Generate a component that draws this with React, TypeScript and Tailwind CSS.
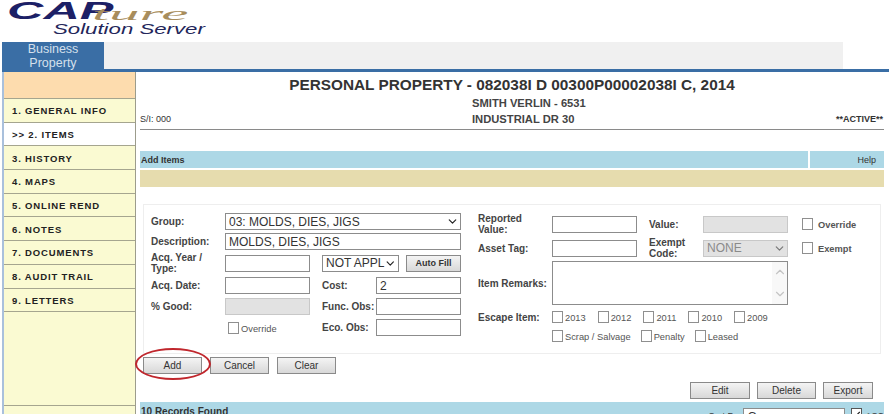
import { ChevronDown, ChevronUp, Check } from "lucide-react";

const navItems = [
  "1. GENERAL INFO",
  ">> 2. ITEMS",
  "3. HISTORY",
  "4. MAPS",
  "5. ONLINE REND",
  "6. NOTES",
  "7. DOCUMENTS",
  "8. AUDIT TRAIL",
  "9. LETTERS",
];

function Logo() {
  return (
    <div className="relative h-[42px] w-[210px] overflow-hidden">
      <span className="absolute left-[7px] top-[-3px] origin-left scale-x-[2.1] text-[24px] font-bold italic leading-[28px] text-[#1c2066]">
        CAP
      </span>
      <span className="absolute left-[92px] top-[4px] origin-left scale-x-[3.4] text-[18px] italic leading-[20px] text-[#a88d5c] [font-family:'Liberation_Serif',serif]">
        ture
      </span>
      <span className="absolute left-[53px] top-[20px] origin-left scale-x-[1.48] text-[15px] italic leading-[17px] text-[#23265a]">
        Solution Server
      </span>
    </div>
  );
}

function Field({ className = "", value = "", disabled = false }: { className?: string; value?: string; disabled?: boolean }) {
  return (
    <input
      readOnly
      defaultValue={value}
      className={`h-[17px] border border-[#8c8c8c] px-[3px] text-[12px] text-[#333] outline-none ${disabled ? "bg-[#e2e2e2] border-[#c8c8c8]" : "bg-white"} ${className}`}
    />
  );
}

function Select({ value, className = "", disabled = false }: { value: string; className?: string; disabled?: boolean }) {
  return (
    <div className={`flex h-[17px] items-center justify-between border border-[#8c8c8c] pl-[3px] pr-[1px] text-[12px] ${disabled ? "bg-[#e2e2e2] border-[#c8c8c8] text-[#8a8a8a]" : "bg-white text-[#333]"} ${className}`}>
      <span className="whitespace-nowrap">{value}</span>
      <ChevronDown size={13} strokeWidth={2.2} className={disabled ? "text-[#777]" : "text-[#222]"} />
    </div>
  );
}

function Label({ children, className = "" }: { children: React.ReactNode; className?: string }) {
  return <div className={`text-[10px] font-bold leading-[11px] text-[#444] ${className}`}>{children}</div>;
}

function Box({ label, bold = false, className = "" }: { label: string; bold?: boolean; className?: string }) {
  return (
    <label className={`flex items-end gap-[2px] ${className}`}>
      <span className="h-[12px] w-[11px] shrink-0 border border-[#8f8f8f] bg-white" />
      <span className={`translate-y-[1px] text-[9.3px] leading-[11px] text-[#555] ${bold ? "font-bold" : ""}`}>{label}</span>
    </label>
  );
}

function Btn({ children, className = "" }: { children: React.ReactNode; className?: string }) {
  return (
    <button className={`h-[17px] w-[59px] border border-[#8a8a8a] bg-gradient-to-b from-[#f4f4f4] to-[#d8d8d8] text-[10px] leading-none text-[#333] ${className}`}>
      {children}
    </button>
  );
}

export default function App() {
  return (
    <div className="h-[414px] w-[889px] overflow-hidden bg-white [font-family:'Liberation_Sans',Arial,sans-serif]">
      <Logo />

      <div className="flex h-[27px] pl-[2px] pr-[46px]">
        <div className="flex w-[102px] items-center justify-center bg-[#3a6ea5] text-center text-[12.5px] leading-[14px] text-[#d5e0ec]">
          Business
          <br />
          Property
        </div>
        <div className="flex-1 bg-[#f0f0f0]" />
      </div>
      <div className="ml-[2px] h-[3px] bg-[#3a6ea5]" />

      <div className="relative ml-[2px] flex h-[342px]">
        <aside className="flex w-[134px] shrink-0 flex-col border-l-2 border-r border-l-[#a9c0dc] border-r-[#9c9c8c] bg-[#fafad2]">
          <div className="h-[27px] border-b border-[#a5a58f] bg-[#fddcae]" />
          {navItems.map((item) => (
            <div
              key={item}
              className={`flex h-[23.7px] shrink-0 items-center border-b border-[#a5a58f] pl-[8px] pt-[2px] text-[9.5px] font-bold tracking-[0.85px] text-[#222] ${item.startsWith(">>") ? "bg-white" : ""}`}
            >
              {item}
            </div>
          ))}
          <div className="flex-1" />
          <div className="h-[9px] border-t border-[#a5a58f] pl-[8px] pt-[6px] text-[9.5px] font-bold leading-[11px] tracking-[0.85px] text-[#222]">
            CLOSE
          </div>
        </aside>

        <main className="min-w-0 flex-1 pl-[4px] pr-[5px]">
          <div className="relative h-[58px] border-b border-[#8a8a8a]">
            <h1 className="pt-[3px] text-center text-[15.35px] font-bold leading-[19px] text-[#333]">
              PERSONAL PROPERTY - 082038I D 00300P00002038I C, 2014
            </h1>
            <p className="pl-[332px] pt-[2px] text-[11.2px] font-bold leading-[14px] text-[#444]">SMITH VERLIN - 6531</p>
            <div className="flex items-center pr-[1px] pt-[2px] leading-[14px] text-[#333]">
              <span className="w-[332px] text-[9px]">S/I: 000</span>
              <span className="text-[11.2px] font-bold text-[#444]">INDUSTRIAL DR 30</span>
              <span className="ml-auto text-[9px] font-bold">**ACTIVE**</span>
            </div>
          </div>

          <div className="mt-[21px] flex h-[17px] gap-[2px] text-[9px] font-bold leading-[18px] text-[#333]">
            <div className="flex-1 bg-[#add8e6] pl-[1px]">Add Items</div>
            <div className="w-[74px] bg-[#add8e6] pr-[8px] text-right text-[9px] font-normal">Help</div>
          </div>
          <div className="mt-[2px] h-[17px] bg-[#e6dcae]" />

          <section className="ml-[3px] mt-[17px] flex h-[150px] w-[738px] border border-[#eeeeee] pl-[7px] pt-[8px]">
            <div className="flex w-[311px] flex-col">
              <div className="flex items-center">
                <Label className="w-[74px]">Group:</Label>
                <Select value="03: MOLDS, DIES, JIGS" className="w-[236px]" />
              </div>
              <div className="mt-[3px] flex items-center">
                <Label className="w-[74px]">Description:</Label>
                <Field className="w-[236px]" value="MOLDS, DIES, JIGS" />
              </div>
              <div className="mt-[2px] flex items-center">
                <Label className="w-[74px] text-[9.5px]">
                  Acq. Year /<br />
                  Type:
                </Label>
                <Field className="w-[85px]" />
                <Select value="NOT APPL" className="ml-[12px] w-[77px]" />
                <Btn className="ml-[7px] !h-[17px] !w-[55px] !text-[9px] font-bold">Auto Fill</Btn>
              </div>
              <div className="mt-[3px] flex items-center">
                <Label className="w-[74px]">Acq. Date:</Label>
                <Field className="w-[85px]" />
                <Label className="ml-[12px] w-[54px]">Cost:</Label>
                <Field className="w-[85px]" value="2" />
              </div>
              <div className="mt-[4px] flex items-center">
                <Label className="w-[74px]">% Good:</Label>
                <Field className="w-[85px]" disabled />
                <Label className="ml-[12px] w-[54px]">Func. Obs:</Label>
                <Field className="w-[85px]" />
              </div>
              <div className="mt-[4px] flex items-center">
                <div className="w-[77px]" />
                <Box label="Override" className="w-[82px]" />
                <Label className="ml-[12px] w-[54px]">Eco. Obs:</Label>
                <Field className="w-[85px]" />
              </div>
            </div>

            <div className="ml-[16px] flex flex-col">
              <div className="flex items-center">
                <Label className="w-[74px] text-[9.3px]">
                  Reported
                  <br />
                  Value:
                </Label>
                <Field className="w-[85px]" />
                <Label className="ml-[12px] w-[54px] text-[9.3px]">Value:</Label>
                <Field className="w-[85px]" disabled />
                <Box label="Override" bold className="ml-[14px] gap-[5px]" />
              </div>
              <div className="mt-[2px] flex items-center">
                <Label className="w-[74px] text-[9.3px]">Asset Tag:</Label>
                <Field className="w-[85px]" />
                <Label className="ml-[12px] w-[54px] text-[9.3px]">
                  Exempt
                  <br />
                  Code:
                </Label>
                <Select value="NONE" disabled className="w-[85px]" />
                <Box label="Exempt" bold className="ml-[14px] gap-[5px]" />
              </div>
              <div className="mt-[2px] flex items-center">
                <Label className="w-[74px]">Item Remarks:</Label>
                <div className="flex h-[44px] w-[236px] justify-end border border-[#8c8c8c] bg-white">
                  <div className="flex w-[15px] flex-col items-center justify-between bg-[#f8f8f8] py-[3px] text-[#c4c4c4]">
                    <ChevronUp size={14} />
                    <ChevronDown size={14} />
                  </div>
                </div>
              </div>
              <div className="mt-[6px] flex items-start">
                <Label className="w-[74px] pt-[1px] text-[9px]">Escape Item:</Label>
                <div className="flex gap-[12px]">
                  <Box label="2013" />
                  <Box label="2012" />
                  <Box label="2011" />
                  <Box label="2010" />
                  <Box label="2009" />
                </div>
              </div>
              <div className="ml-[74px] mt-[7px] flex gap-[10px]">
                <Box label="Scrap / Salvage" />
                <Box label="Penalty" />
                <Box label="Leased" />
              </div>
            </div>
          </section>

          <div className="ml-[3px] mt-[3px] flex gap-[8px]">
            <Btn>Add</Btn>
            <Btn>Cancel</Btn>
            <Btn>Clear</Btn>
          </div>

          <div className="mr-[11px] mt-[8px] flex justify-end gap-[7px]">
            <Btn className="!w-[60px]">Edit</Btn>
            <Btn>Delete</Btn>
            <Btn className="!w-[50px]">Export</Btn>
          </div>

          <div className="mt-[3px] flex h-[20px] items-start justify-between bg-[#add8e6] text-[10px] font-bold text-[#333]">
            <span className="pl-[1px] pt-[4px] leading-[11px]">10 Records Found</span>
            <div className="flex items-start pt-[6px]">
              <span className="pt-[3px] text-[9px] font-normal leading-[11px]">Sort By:</span>
              <Select value="Group" className="ml-[3px] w-[102px] font-normal" />
              <span className="ml-[6px] flex h-[12px] w-[11px] items-center justify-center border border-[#555] bg-white">
                <Check size={11} strokeWidth={3} className="text-[#222]" />
              </span>
              <span className="ml-[3px] pt-[3px] text-[9px] font-normal leading-[11px]">ASC</span>
            </div>
          </div>
        </main>

        <div className="absolute left-[133px] top-[276px] h-[32px] w-[76px] rounded-[50%] border-2 border-[#c0272d]" />
      </div>
    </div>
  );
}
